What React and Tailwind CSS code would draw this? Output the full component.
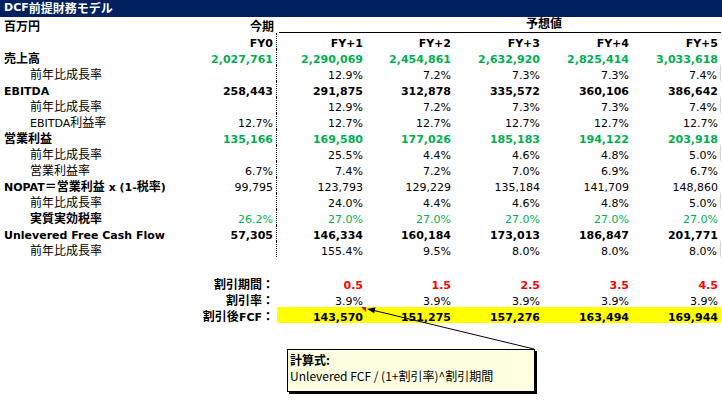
import React from 'react';

const green = 'text-[#00b050]';

// Japanese runs are set a touch larger, like the sheet's CJK glyphs
const J = ({ children }) => <span className="text-[12px]">{children}</span>;

const rows = [
  { label: <J>売上高</J>, bold: true, vals: ['2,027,761', '2,290,069', '2,454,861', '2,632,920', '2,825,414', '3,033,618'], num: `font-bold ${green}` },
  { label: <J>前年比成長率</J>, indent: true, vals: ['', '12.9%', '7.2%', '7.3%', '7.3%', '7.4%'], edge: true },
  { label: 'EBITDA', bold: true, vals: ['258,443', '291,875', '312,878', '335,572', '360,106', '386,642'], num: 'font-bold' },
  { label: <J>前年比成長率</J>, indent: true, vals: ['', '12.9%', '7.2%', '7.3%', '7.3%', '7.4%'], edge: true },
  { label: <>EBITDA<J>利益率</J></>, indent: true, vals: ['12.7%', '12.7%', '12.7%', '12.7%', '12.7%', '12.7%'] },
  { label: <J>営業利益</J>, bold: true, vals: ['135,166', '169,580', '177,026', '185,183', '194,122', '203,918'], num: `font-bold ${green}` },
  { label: <J>前年比成長率</J>, indent: true, vals: ['', '25.5%', '4.4%', '4.6%', '4.8%', '5.0%'], edge: true },
  { label: <J>営業利益率</J>, indent: true, vals: ['6.7%', '7.4%', '7.2%', '7.0%', '6.9%', '6.7%'] },
  { label: <>NOPAT<J>＝営業利益</J>{'\u00a0x (1-'}<J>税率</J>)</>, bold: true, vals: ['99,795', '123,793', '129,229', '135,184', '141,709', '148,860'] },
  { label: <J>前年比成長率</J>, indent: true, vals: ['', '24.0%', '4.4%', '4.6%', '4.8%', '5.0%'], edge: true },
  { label: <J>実質実効税率</J>, indent: true, bold: true, vals: ['26.2%', '27.0%', '27.0%', '27.0%', '27.0%', '27.0%'], num: green },
  { label: 'Unlevered Free Cash Flow', bold: true, vals: ['57,305', '146,334', '160,184', '173,013', '186,847', '201,771'], num: 'font-bold' },
  { label: <J>前年比成長率</J>, indent: true, vals: ['', '155.4%', '9.5%', '8.0%', '8.0%', '8.0%'], edge: true },
];

const grid = 'grid grid-cols-[201px_76px_89px_88px_89px_89px_89px]';

function DataRow({ row }) {
  return (
    <div className={`${grid} h-4`}>
      <div className={`flex items-end whitespace-nowrap leading-[11px] ${row.indent ? 'pl-[30px]' : 'pl-[4px]'} ${row.bold ? 'font-bold' : ''}`}>
        {row.label}
      </div>
      {row.vals.map((v, i) => (
        <div
          key={i}
          className={`flex items-end justify-end pr-[3px] leading-[11px] ${row.num || ''} ${i === 0 ? 'border-r border-dotted border-black' : ''} ${i === 5 && row.edge ? 'border-r border-[#d4d4d4]' : ''}`}
        >
          {v}
        </div>
      ))}
    </div>
  );
}

function BottomRow({ label, vals, num, yellow, marker }) {
  return (
    <div className={`${grid} h-4`}>
      <div />
      <div className="flex items-end justify-end whitespace-nowrap pr-[3px] font-bold leading-[11px]">{label}</div>
      {vals.map((v, i) => (
        <div key={i} className={`relative flex items-end justify-end pr-[3px] leading-[11px] ${num} ${yellow ? 'bg-[#ffff00]' : ''}`}>
          {marker && i === 0 && (
            <span className="absolute right-0 top-0 h-0 w-0 border-l-[5px] border-t-[5px] border-l-transparent border-t-[#ff0000]" />
          )}
          {v}
        </div>
      ))}
    </div>
  );
}

export default function App() {
  return (
    <div className="relative h-[404px] w-[722px] overflow-hidden bg-white text-[11px] text-black [font-family:'DejaVu_Sans','Noto_Sans_CJK_JP',sans-serif]">
      {/* Title bar */}
      <div className="flex h-[17px] items-center bg-[#002060] pl-[4px] font-bold text-white">
        DCF<J>前提財務モデル</J>
      </div>

      {/* Header */}
      <div className={`${grid} h-4`}>
        <div className="flex items-end pl-[4px] font-bold leading-[11px]"><J>百万円</J></div>
        <div className="flex items-end justify-end pr-[3px] font-bold leading-[11px]"><J>今期</J></div>
        <div className="col-span-5 pl-[2px]">
          <div className="flex h-4 items-end justify-center border-b border-black pb-[2px] pl-[88px] font-bold leading-[11px]">
            <J>予想値</J>
          </div>
        </div>
      </div>
      <div className={`${grid} h-4 font-bold`}>
        <div />
        {['FY0', 'FY+1', 'FY+2', 'FY+3', 'FY+4', 'FY+5'].map((f, i) => (
          <div key={f} className={`flex items-end justify-end pr-[3px] leading-[11px] ${i === 0 ? 'border-r border-dotted border-black' : ''}`}>
            {f}
          </div>
        ))}
      </div>

      {rows.map((r, i) => (
        <DataRow key={i} row={r} />
      ))}

      <div className="h-[18px]" />

      <BottomRow label={<J>割引期間：</J>} vals={['0.5', '1.5', '2.5', '3.5', '4.5']} num="font-bold text-[#ff0000]" />
      <BottomRow label={<J>割引率：</J>} vals={['3.9%', '3.9%', '3.9%', '3.9%', '3.9%']} num="" />
      <BottomRow label={<><J>割引後</J>FCF<J>：</J></>} vals={['143,570', '151,275', '157,276', '163,494', '169,944']} num="font-bold" yellow marker />

      {/* Comment callout */}
      <svg className="pointer-events-none absolute left-0 top-0" width="722" height="404">
        <line x1="534" y1="349" x2="372" y2="310" stroke="#000" strokeWidth="1" />
        <polygon points="367,309 375.5,307.2 374.2,313.2" fill="#000" />
      </svg>
      <div className="absolute left-[287px] top-[349px] h-[43px] w-[248px] border border-black bg-[#ffffe1] px-[2px] pt-[2px] text-[12px] leading-[16px] shadow-[2px_2px_0_#000] [font-family:'Noto_Sans_CJK_JP',sans-serif]">
        <div className="font-bold">計算式:</div>
        <div className="whitespace-nowrap">Unlevered FCF / (1+割引率)^割引期間</div>
      </div>
    </div>
  );
}
